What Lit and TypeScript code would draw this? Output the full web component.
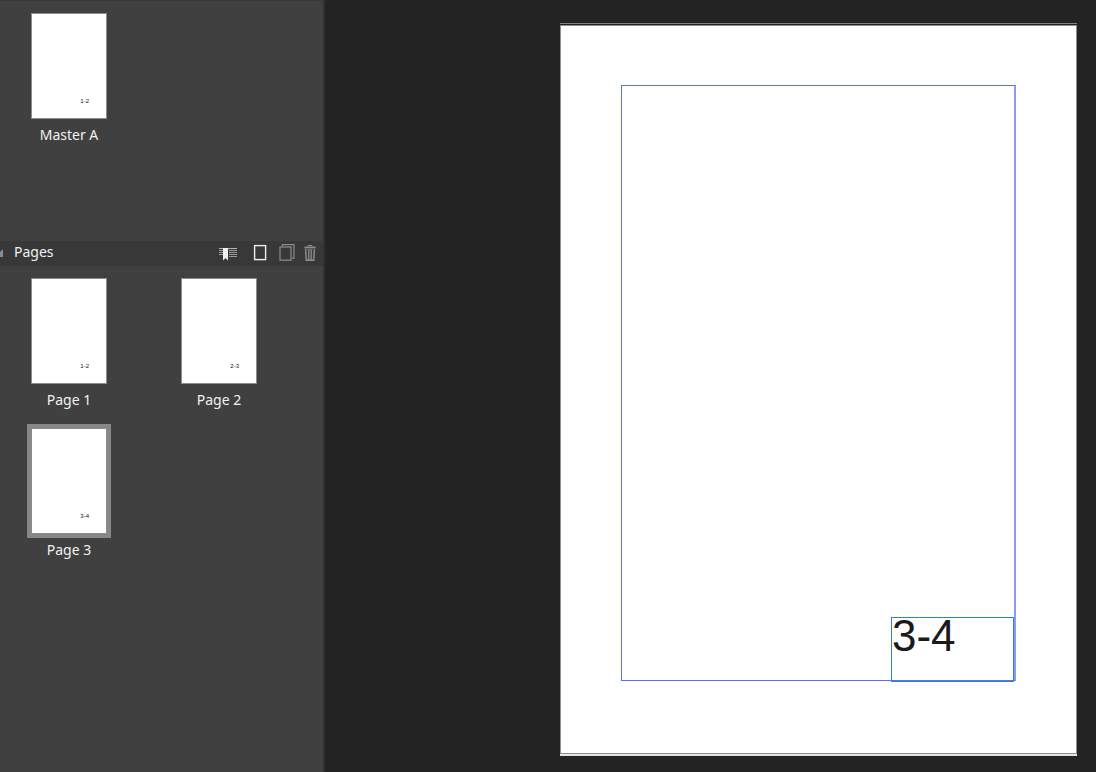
import { LitElement, html, css, svg } from "lit";
import { customElement, property, state } from "lit/decorators.js";

interface Page {
  name: string;
  number: string;
}

const masters: Page[] = [{ name: "Master A", number: "1-2" }];

const pages: Page[] = [
  { name: "Page 1", number: "1-2" },
  { name: "Page 2", number: "2-3" },
  { name: "Page 3", number: "3-4" },
];

@customElement("page-thumb")
class PageThumb extends LitElement {
  @property() name = "";
  @property() number = "";
  @property({ type: Boolean }) selected = false;

  static styles = css`
    :host {
      display: block;
    }
    .item {
      display: block;
      width: 100%;
      padding: 0;
      border: 0;
      background: none;
      color: #f1f1f1;
      font: 14px/24px "Noto Sans", "Open Sans", sans-serif;
      text-align: center;
    }
    .frame {
      display: block;
      padding: 4px;
    }
    .sheet {
      display: flex;
      box-sizing: border-box;
      height: 106px;
      padding: 0 17px 13px 0;
      border: 1px solid #8d8d8d;
      background: #fff;
      color: #111;
      font: 6px/8px "Liberation Sans", Arial, sans-serif;
      align-items: flex-end;
      justify-content: flex-end;
    }
    .selected {
      background: #878787;
    }
    .label {
      display: block;
      white-space: nowrap;
    }
  `;

  render() {
    return html`<button class="item" aria-pressed=${this.selected ? "true" : "false"}>
      <span class="frame ${this.selected ? "selected" : ""}">
        <span class="sheet">${this.number}</span>
      </span>
      <span class="label">${this.name}</span>
    </button>`;
  }
}

const bookmarkIcon = svg`<svg width="18" height="18" viewBox="0 0 18 18" fill="none">
  <path d="M0 4.5H18" stroke="#b4b4b4"/>
  <path d="M0 6.5H4M10 6.5H18M0 8.5H4M10 8.5H18M0 10.5H4M10 10.5H18M10 12.5H18" stroke="#9a9a9a"/>
  <path d="M4 4H9V16.5L6.5 14L4 16.5Z" fill="#f0f0f0"/>
</svg>`;

const pageIcon = svg`<svg width="14" height="18" viewBox="0 0 14 18" fill="none">
  <rect x="1.6" y="1.6" width="11" height="14" stroke="#efefef" stroke-width="1.4"/>
</svg>`;

const duplicateIcon = svg`<svg width="16" height="18" viewBox="0 0 16 18" fill="none" stroke="#8c8c8c">
  <rect x="1" y="3" width="11" height="13.2" stroke-width="1.2"/>
  <path d="M3.4 2.4V.6H15V14.2H13" stroke-width="1.2"/>
</svg>`;

const trashIcon = svg`<svg width="12" height="18" viewBox="0 0 12 18" fill="none" stroke="#8f8f8f">
  <path d="M4 2.5V1.5H8V2.5" stroke-width="1"/>
  <path d="M.5 3.5H11.5" stroke-width="1.8"/>
  <path d="M1.6 5L2.2 16.3H9.8L10.4 5" stroke-width="1.4"/>
  <path d="M4.4 5V16M6 5V16M7.6 5V16" stroke-width=".9"/>
</svg>`;

@customElement("pages-panel")
class PagesPanel extends LitElement {
  @state() private current = 2;

  static styles = css`
    :host {
      display: flex;
      flex-direction: column;
      box-sizing: border-box;
      width: 325px;
      flex: none;
      border-top: 1px solid #383838;
      border-right: 2px solid #303030;
      background: #404040;
      overflow: hidden;
    }
    .grid {
      display: grid;
      grid-template-columns: repeat(2, 84px);
      gap: 12px 66px;
      padding: 8px 27px;
      align-content: start;
    }
    .masters {
      min-height: 224px;
    }
    .bar {
      display: flex;
      box-sizing: border-box;
      align-items: center;
      height: 25px;
      padding: 0 7px 2px 0;
      background: #383838;
      color: #f1f1f1;
    }
    .title {
      flex: 1;
      margin: 0 0 0 11px;
      padding-bottom: 2px;
      font: 14px/20px "Noto Sans", "Open Sans", sans-serif;
    }
    .arrow {
      display: block;
    }
    .tools {
      display: flex;
      align-items: center;
    }
    .tool {
      display: flex;
      padding: 0;
      border: 0;
      background: none;
    }
    .tool + .tool {
      margin-left: 12px;
    }
    .tool + .last {
      margin-left: 9px;
    }
    .tool:first-child {
      margin-right: 4px;
    }
  `;

  render() {
    return html`
      <section class="grid masters" aria-label="Master pages">
        ${masters.map((m) => html`<page-thumb name=${m.name} number=${m.number}></page-thumb>`)}
      </section>
      <header class="bar">
        <svg class="arrow" width="3" height="8" viewBox="0 0 3 8">
          <path d="M3 0V8H0V3Z" fill="#8a8a8a" />
        </svg>
        <h2 class="title">Pages</h2>
        <div class="tools">
          <button class="tool" aria-label="Apply master">${bookmarkIcon}</button>
          <button class="tool" aria-label="Add page">${pageIcon}</button>
          <button class="tool" aria-label="Duplicate page">${duplicateIcon}</button>
          <button class="tool last" aria-label="Delete page">${trashIcon}</button>
        </div>
      </header>
      <section class="grid" aria-label="Pages">
        ${pages.map(
          (p, i) => html`<page-thumb
            name=${p.name}
            number=${p.number}
            ?selected=${i === this.current}
            @click=${() => (this.current = i)}
          ></page-thumb>`
        )}
      </section>
    `;
  }
}

@customElement("app-root")
class AppRoot extends LitElement {
  static styles = css`
    :host {
      display: flex;
      height: 100vh;
      background: #232323;
      overflow: hidden;
    }
    .canvas {
      display: flex;
      flex: 1;
      min-width: 0;
      justify-content: flex-end;
      align-items: flex-start;
      padding: 23px 19px 16px;
    }
    .page {
      box-sizing: border-box;
      width: 517px;
      flex: none;
      border-top: 1px solid #808080;
      border-bottom: 2px solid #e4e4e4;
      padding-top: 1px;
    }
    .paper {
      position: relative;
      box-sizing: border-box;
      height: 729px;
      padding: 59px 60px 72px;
      border: 1px solid #8e8e8e;
      background: #fff;
    }
    .margins {
      box-sizing: border-box;
      height: 596px;
      border: 1px solid #5f6ef0;
      border-right: 2px solid #8f99f2;
    }
    .frame {
      position: absolute;
      right: 62px;
      bottom: 71px;
      box-sizing: border-box;
      width: 123px;
      height: 65px;
      border: 1px solid #2c80e4;
      color: #1a1a1a;
      font: 44px/36px "Liberation Sans", Arial, sans-serif;
    }
  `;

  render() {
    return html`
      <pages-panel></pages-panel>
      <main class="canvas">
        <article class="page">
          <div class="paper">
            <div class="margins"></div>
            <div class="frame">3-4</div>
          </div>
        </article>
      </main>
    `;
  }
}
